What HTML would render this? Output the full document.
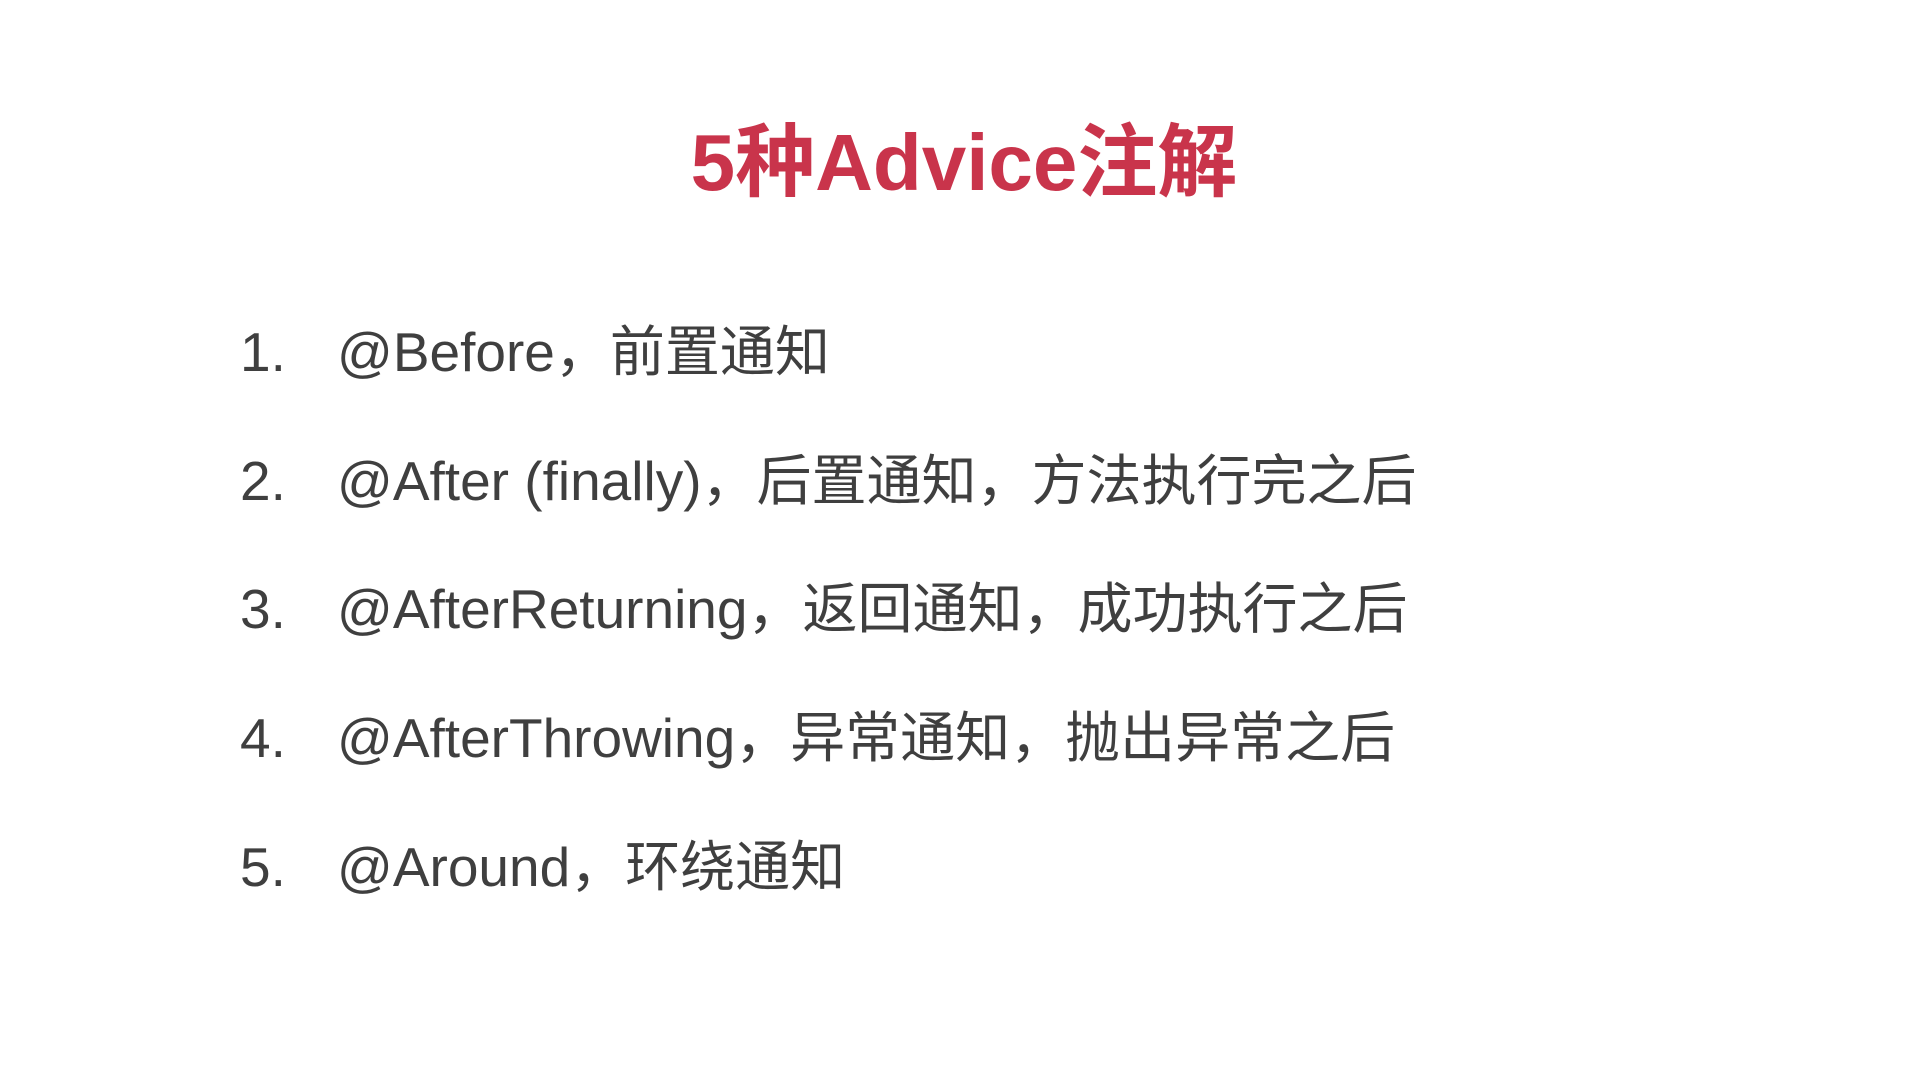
<!DOCTYPE html>
<html><head><meta charset="utf-8"><style>
html,body{margin:0;padding:0;background:#fff;width:1920px;height:1080px;overflow:hidden}
.t{position:absolute;left:0;width:1928px;text-align:center;top:123px;font:bold 80px/1 "Liberation Sans","Noto Sans CJK SC",sans-serif;color:#c9344b;letter-spacing:0px}
.l{position:absolute;left:240px;font:55px/1 "Liberation Sans","Noto Sans CJK SC",sans-serif;color:#3f3f3f;white-space:nowrap}
.l b{font-weight:normal;display:inline-block;width:97px}
</style></head><body>
<div class="t">5种Advice注解</div>
<div class="l" style="top:325px"><b>1.</b>@Before，前置通知</div>
<div class="l" style="top:454px"><b>2.</b>@After (finally)，后置通知，方法执行完之后</div>
<div class="l" style="top:582px"><b>3.</b>@AfterReturning，返回通知，成功执行之后</div>
<div class="l" style="top:711px"><b>4.</b>@AfterThrowing，异常通知，抛出异常之后</div>
<div class="l" style="top:840px"><b>5.</b>@Around，环绕通知</div>
</body></html>
